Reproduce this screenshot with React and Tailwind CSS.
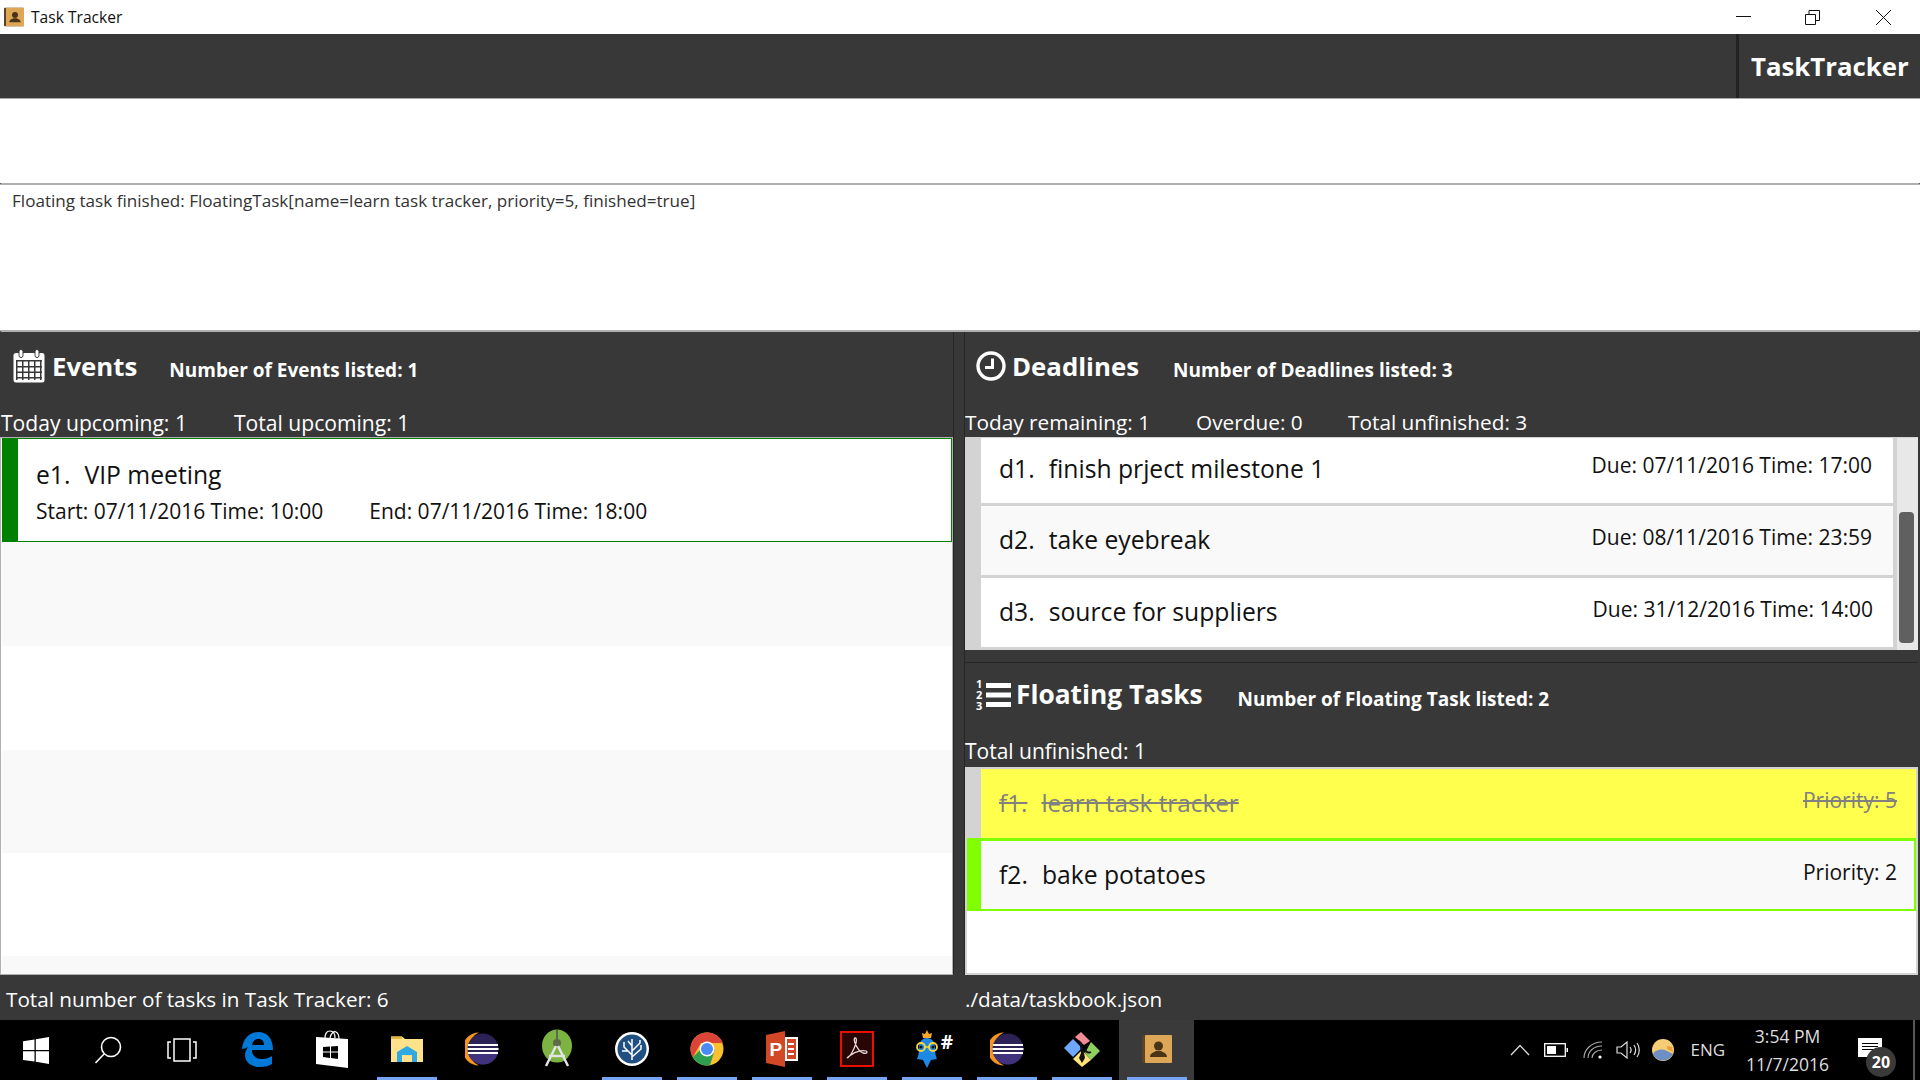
import React from 'react'

const font = { fontFamily: '"Open Sans", "Noto Sans", sans-serif' }

const Underline = ({ on }) => <div className={on ? 'h-[3px] w-[60px] bg-[#76a5f5]' : 'h-[3px] w-[60px]'} />

const TaskButton = ({ on, active, children }) => (
  <div className={`flex h-full w-[75px] flex-col items-center ${active ? 'bg-[#3a3a3a]' : ''}`}>
    <div className="flex flex-1 items-center justify-center">{children}</div>
    <Underline on={on} />
  </div>
)

const CalendarIcon = () => (
  <svg width="32" height="34" viewBox="0 0 32 34">
    <rect x="0.5" y="4" width="31" height="29.5" rx="2.5" fill="#fff" />
    <rect x="6" y="0.5" width="4" height="8" rx="2" fill="#fff" stroke="#383838" />
    <rect x="22" y="0.5" width="4" height="8" rx="2" fill="#fff" stroke="#383838" />
    <g fill="#383838">
      <rect x="3" y="11" width="26" height="1.5" />
      <rect x="3" y="17" width="26" height="1.5" />
      <rect x="3" y="22.5" width="26" height="1.5" />
      <rect x="3" y="28" width="26" height="1.5" />
      <rect x="3" y="11" width="1.5" height="20" />
      <rect x="9" y="11" width="1.5" height="20" />
      <rect x="15" y="11" width="1.5" height="20" />
      <rect x="21" y="11" width="1.5" height="20" />
      <rect x="27" y="11" width="1.5" height="20" />
    </g>
  </svg>
)

const ClockIcon = () => (
  <svg width="30" height="30" viewBox="0 0 30 30" fill="none" stroke="#fff">
    <circle cx="15" cy="15" r="13" strokeWidth="3.4" />
    <path d="M16.5 7.5V16.5H9" strokeWidth="3" />
  </svg>
)

// numbered list glyph: the digits are part of the icon
const ListIcon = () => (
  <svg width="35" height="34" viewBox="0 0 35 34" fill="#fff">
    <g fontSize="11" fontWeight="700" fontFamily="Open Sans">
      <text x="0" y="10">1</text>
      <text x="0" y="21">2</text>
      <text x="0" y="32">3</text>
    </g>
    <rect x="10" y="5" width="25" height="5" />
    <rect x="10" y="14.500" width="25" height="5" />
    <rect x="10" y="24" width="25" height="5" />
  </svg>
)

const EclipseIcon = () => (
  <svg width="34" height="34" viewBox="0 0 34 34">
    <path d="M14 0.5A16.5 16.5 0 0 0 14 33.5A18 18 0 0 1 14 0.5Z" fill="#f7941e" />
    <circle cx="18" cy="17" r="15.5" fill="#2c2255" />
    <path d="M3 21h30a15.5 15.5 0 0 1-30 0Z" fill="#473788" opacity="0.8" />
    <g fill="#fff">
      <rect x="3" y="12" width="30" height="2" />
      <rect x="2.5" y="16" width="31" height="2" />
      <rect x="3" y="20" width="30" height="2" />
    </g>
  </svg>
)

const AppIcon = ({ size = 30 }) => (
  <svg width={size} height={size} viewBox="0 0 30 30">
    <rect x="0" y="1" width="30" height="28" rx="1.5" fill="#5b4322" />
    <rect x="3" y="1" width="27" height="28" rx="1" fill="#dda757" />
    <circle cx="16.5" cy="12" r="4.5" fill="#4a3418" />
    <path d="M8 23c0-4 4-4.5 6-6h5c2 1.5 6 2 6 6Z" fill="#4a3418" />
  </svg>
)

const Taskbar = () => (
  <div className="flex h-[60px] shrink-0 items-center bg-black">
    <div className="flex h-full w-[72px] items-center justify-center">
      <svg width="26" height="27" viewBox="0 0 26 27" fill="#fff">
        <path d="M0 4.2 11.5 2.5V13H0ZM12.8 2.3 26 0V13H12.8ZM0 14.3H11.5V24.6L0 23ZM12.8 14.3H26V27L12.8 24.8Z" />
      </svg>
    </div>
    <div className="flex h-full w-[72px] items-center justify-center">
      <svg width="28" height="28" viewBox="0 0 28 28" fill="none" stroke="#fff" strokeWidth="1.6">
        <circle cx="17" cy="11" r="9.5" />
        <path d="M10 18 1.5 27" />
      </svg>
    </div>
    <div className="flex h-full w-[75px] items-center justify-center">
      <svg width="30" height="24" viewBox="0 0 30 24" fill="none" stroke="#fff" strokeWidth="1.5">
        <rect x="7" y="1" width="16" height="22" />
        <path d="M4 4H1V20H4M26 4H29V20H26" />
      </svg>
    </div>
    <TaskButton>
      <svg width="32" height="36" viewBox="0 0 32 36">
        <path
          d="M1 18C2 7 9 1 17 1c9 0 15 6 15 18H11c0 6 4 9 10 9 4 0 7-1 10-3v8c-3 2-7 3-12 3C10 36 4 31 4 24c0-3 1-5 3-8-2 1-4 2-6 2Zm10-4h12c0-4-2-6-6-6-3 0-5 2-6 6Z"
          fill="#0078d7"
        />
      </svg>
    </TaskButton>
    <TaskButton>
      <svg width="32" height="38" viewBox="0 0 32 38">
        <path d="M9 8C9 2 12 1 14 1s5 1 5 7M14 8c1-5 4-7 6-6s3 3 3 7" fill="none" stroke="#fff" strokeWidth="1.2" />
        <path d="M0 7 32 9V38L0 34Z" fill="#fff" />
        <path d="M7 17 14 16.500V21.500H7ZM15 16.500 22 16V21.500H15ZM7 22.500H14V28L7 27ZM15 22.500H22V29L15 28Z" fill="#000" />
      </svg>
    </TaskButton>
    <TaskButton on>
      <svg width="32" height="28" viewBox="0 0 32 28">
        <path d="M0 1.500H11L14 4H32V27H0Z" fill="#ffe28a" />
        <rect x="0" y="1.500" width="11" height="2.500" fill="#e6b740" />
        <path d="M6 17 16 11 26 17V27H21V20H11V27H6Z" fill="#2fa9e4" />
      </svg>
    </TaskButton>
    <TaskButton>
      <EclipseIcon />
    </TaskButton>
    <TaskButton>
      <svg width="32" height="40" viewBox="0 0 32 40">
        <ellipse cx="16" cy="17" rx="15" ry="16.500" fill="#7cb342" />
        <circle cx="16" cy="14" r="4" fill="#5d6b4a" />
        <path d="M15 1h2v10h-2Z" fill="#5d6b4a" />
        <path d="M15 17 5 37M17 17 27 37M8 27H24" stroke="#e3e3e3" strokeWidth="2.500" fill="none" />
      </svg>
    </TaskButton>
    <TaskButton on>
      <svg width="36" height="36" viewBox="0 0 36 36">
        <circle cx="18" cy="18" r="17" fill="#fff" />
        <circle cx="18" cy="18" r="14.500" fill="#205081" />
        <path d="M18 29V8M18 24 10 16V11M18 20 26 12V9M18 26 27 18V14M14 20 8 20M18 15 14 10" stroke="#fff" strokeWidth="1.500" fill="none" />
      </svg>
    </TaskButton>
    <TaskButton on>
      <svg width="34" height="34" viewBox="0 0 34 34">
        <circle cx="17" cy="17" r="16.500" fill="#fbc02d" />
        <path d="M17 .5A16.500 16.500 0 0 0 2.700 25.200L11 11H33A16.500 16.500 0 0 0 17 .5Z" fill="#db4437" />
        <path d="M2.700 25.200A16.500 16.500 0 0 0 20 33.200L25 17 11 17Z" fill="#2e9e4f" />
        <circle cx="17" cy="17" r="7.500" fill="#fff" />
        <circle cx="17" cy="17" r="6" fill="#4a8af4" />
      </svg>
    </TaskButton>
    <TaskButton on>
      <svg width="32" height="36" viewBox="0 0 32 36">
        <path d="M0 4 19 0V36L0 32Z" fill="#d24726" />
        <rect x="19" y="6" width="13" height="24" fill="#fff" />
        <rect x="21" y="8" width="9" height="20" fill="#d24726" />
        <path d="M22 12h6v2h-6ZM22 17h6v2h-6ZM22 22h6v2h-6Z" fill="#fff" />
        <text x="3.500" y="25" fontSize="19" fontWeight="700" fill="#fff" fontFamily="Liberation Sans">P</text>
      </svg>
    </TaskButton>
    <TaskButton on>
      <svg width="34" height="36" viewBox="0 0 34 36">
        <rect x="1" y="1" width="32" height="34" fill="#2a0505" stroke="#eb0f00" strokeWidth="2" />
        <path d="M7 27c3-1 7-8 9-15 1-4 0-5-1-5s-1 2 0 5c2 5 5 9 8 10 4 1 5-1 3-2-3-1-10 0-15 4-2 1-4 3-4 3Z" fill="none" stroke="#e8d9d9" strokeWidth="1.300" />
      </svg>
    </TaskButton>
    <TaskButton on>
      <div className="flex items-start">
        <svg width="34" height="38" viewBox="0 0 34 38">
          <path d="M17 0l2 4 3-1-1 5H13l-1-5 3 1Z" fill="#f9a825" />
          <path d="M17 8c6 0 8 5 8 11 0 6 2 10 2 10l-6 1-4 8-4-8-6-1s2-4 2-10c0-6 2-11 8-11Z" fill="#1e88e5" />
          <circle cx="11" cy="17" r="4" fill="none" stroke="#fdd835" strokeWidth="1.800" />
          <circle cx="23" cy="17" r="4" fill="none" stroke="#fdd835" strokeWidth="1.800" />
          <path d="M15 17h4" stroke="#fdd835" strokeWidth="1.500" />
          <circle cx="11" cy="17" r="1.500" fill="#111" />
          <circle cx="23" cy="17" r="1.500" fill="#111" />
        </svg>
        <span className="-ml-[3px] text-[19px] leading-[24px] font-bold text-white">#</span>
      </div>
    </TaskButton>
    <TaskButton on>
      <EclipseIcon />
    </TaskButton>
    <TaskButton on>
      <svg width="36" height="36" viewBox="0 0 36 36">
        <path d="M17 1 26 10 20 14 11 6Z" fill="#f28b94" />
        <path d="M27 11 36 20 27 29 21 22Z" fill="#8fd05f" />
        <path d="M9 8 18 17 9 26 0 17Z" fill="#6ea8fe" />
        <path d="M18 19 27 29 18 36 9 28Z" fill="#ffe27a" />
        <path d="M15 9 18 12 20 22 21 27 18 32 15 27 17 22Z" fill="#111" />
        <path d="M21 18a4 4 0 0 0 6 3" stroke="#111" strokeWidth="2" fill="none" />
      </svg>
    </TaskButton>
    <TaskButton on active>
      <AppIcon />
    </TaskButton>

    <div className="ml-auto flex h-full items-center">
      <svg width="20" height="12" viewBox="0 0 20 12" fill="none" stroke="#ddd" strokeWidth="1.300" className="mr-[14px]">
        <path d="M1 11 10 1.500 19 11" />
      </svg>
      <svg width="24" height="14" viewBox="0 0 24 14" className="mr-[15px]">
        <rect x="0.700" y="0.700" width="20.600" height="12.600" fill="none" stroke="#fff" strokeWidth="1.300" />
        <rect x="3" y="3" width="9" height="8" fill="#fff" />
        <rect x="22.500" y="5" width="1.500" height="4" fill="#fff" />
      </svg>
      <svg width="20" height="18" viewBox="0 0 20 18" fill="none" stroke="#aaa" strokeWidth="1.100" className="mr-[13px]">
        <path d="M1 17C1 9 8 1 19 1M5 17C5 11 10 5 19 5M9 17C9 13 13 9 19 9" />
        <circle cx="17" cy="16" r="1.600" fill="#fff" stroke="none" />
      </svg>
      <svg width="24" height="18" viewBox="0 0 24 18" fill="none" stroke="#ddd" strokeWidth="1.200" className="mr-[12px]">
        <path d="M1 6H5L11 1V17L5 12H1Z" />
        <path d="M14 6C15.500 8 15.500 10 14 12M18 4C20 7 20 11 18 14M21 2C24 6 24 12 21 16" />
      </svg>
      <svg width="22" height="22" viewBox="0 0 22 22" className="mr-[17px]">
        <circle cx="11" cy="11" r="11" fill="#f4cd76" />
        <path d="M1 15C4 10 10 10 13 11L21 15A11 11 0 0 1 1 15Z" fill="#6d8fc4" />
        <path d="M15 7 20 8 21 13 15 10Z" fill="#eba03a" />
      </svg>
      <span className="mr-[21px] text-[17px] text-[#ddd]">ENG</span>
      <div className="mr-[29px] flex flex-col items-center text-[17.5px] leading-[28px] text-[#ddd]">
        <span>3:54 PM</span>
        <span>11/7/2016</span>
      </div>
      <div className="relative mt-[18px] mr-[31px] h-[19px] w-[24px] self-start bg-white">
        <div className="mx-auto mt-[5px] h-[1px] w-[16px] bg-black" />
        <div className="mx-auto mt-[2px] h-[1px] w-[16px] bg-black" />
        <div className="mx-auto mt-[2px] h-[1px] w-[16px] bg-black" />
        <div className="absolute top-[9px] left-[8px] flex h-[30px] w-[30px] items-center justify-center rounded-full bg-[#3a3a3a] text-[16px] font-bold text-white">
          20
        </div>
      </div>
      <div className="h-full w-[2px] bg-[#555]" />
      <div className="w-[5px]" />
    </div>
  </div>
)

const DeadlineRow = ({ id, name, due, shade, height, titleTop, dueTop, dueRight }) => (
  <div className={`flex w-full bg-[#d3d3d3] ${height}`}>
    <div className="w-[16px] shrink-0" />
    <div className={`mb-[3px] flex flex-1 items-start justify-between pl-[18px] ${dueRight} ${shade ? 'bg-[#f9f9f9]' : 'bg-white'}`}>
      <span className={`${titleTop} text-[24.7px] leading-[34px] text-[#111]`}>
        {id}
        <span className="ml-[14px]">{name}</span>
      </span>
      <span className={`${dueTop} text-[21px] leading-[32px] text-[#111]`}>{due}</span>
    </div>
  </div>
)

export default function App() {
  return (
    <div className="flex h-[1080px] w-[1920px] flex-col overflow-hidden bg-[#383838]" style={font}>
      {/* title bar */}
      <div className="flex h-[34px] shrink-0 items-center bg-white">
        <div className="ml-[4px] flex">
          <AppIcon size={20} />
        </div>
        <span className="ml-[7px] pt-[2px] text-[15.6px] text-[#111]">Task Tracker</span>
        <div className="ml-auto flex items-center">
          <svg width="15" height="2" className="mr-[54px]">
            <rect width="15" height="1" y="0" fill="#111" />
          </svg>
          <svg width="15" height="15" viewBox="0 0 15 15" fill="none" stroke="#111" className="mr-[56px]">
            <path d="M0.500 4.500H10.500V14.500H0.500ZM4 4.500V.5H14.500V10.500H10.500" />
          </svg>
          <svg width="15" height="15" viewBox="0 0 15 15" fill="none" stroke="#111" className="mr-[29px]">
            <path d="M0 0 15 15M15 0 0 15" />
          </svg>
        </div>
      </div>

      {/* header */}
      <div className="flex h-[65px] shrink-0 justify-end border-b border-[#aaa] bg-[#383838]">
        <div className="flex w-[184px] items-center border-l-[3px] border-[#222] pl-[12px]">
          <span className="text-[25.8px] font-bold text-white">TaskTracker</span>
        </div>
      </div>

      {/* command box */}
      <div className="h-[84px] shrink-0 bg-white" />

      {/* result box */}
      <div className="h-[149px] shrink-0 rounded-[2px] border-y-2 border-[#b0b0b0] bg-white pt-[4px] pl-[12px]">
        <span className="text-[17.1px] leading-[24px] text-[#333]">
          Floating task finished: FloatingTask[name=learn task tracker, priority=5, finished=true]
        </span>
      </div>

      <div className="flex min-h-0 flex-1">
        {/* events */}
        <div className="flex w-[953px] shrink-0 flex-col">
          <div className="flex h-[64px] items-center pt-[4px] pl-[13px]">
            <CalendarIcon />
            <span className="ml-[7px] text-[25.8px] font-bold text-white">Events</span>
            <span className="mt-[8px] ml-[32px] text-[19px] font-bold text-white">Number of Events listed: 1</span>
          </div>
          <div className="flex h-[41px] items-end pl-[1px] text-[21.1px] leading-[29px] text-white">
            <span className="w-[233px]">Today upcoming: 1</span>
            <span>Total upcoming: 1</span>
          </div>
          <div className="flex h-[538px] flex-col overflow-hidden border border-[#b0b0b0] bg-white pl-[1px]">
            <div className="flex h-[104px] shrink-0 border border-[#008000] bg-white">
              <div className="w-[15px] shrink-0 bg-[#008000]" />
              <div className="pt-[17px] pl-[18px]">
                <div className="text-[24.7px] leading-[38px] text-[#111]">
                  e1.<span className="ml-[14px]">VIP meeting</span>
                </div>
                <div className="mt-[1px] text-[21px] leading-[32px] text-[#111]">
                  Start: 07/11/2016 Time: 10:00<span className="ml-[46px]">End: 07/11/2016 Time: 18:00</span>
                </div>
              </div>
            </div>
            <div className="h-[104px] shrink-0 bg-[#f9f9f9]" />
            <div className="h-[104px] shrink-0 bg-white" />
            <div className="h-[103px] shrink-0 bg-[#f9f9f9]" />
            <div className="h-[103px] shrink-0 bg-white" />
            <div className="h-[18px] shrink-0 bg-[#f9f9f9]" />
          </div>
        </div>

        {/* divider */}
        <div className="w-[12px] shrink-0 border-x border-[#262626]" />

        {/* deadlines + floating */}
        <div className="flex w-[953px] shrink-0 flex-col">
          <div className="flex h-[64px] items-center pt-[4px] pl-[11px]">
            <ClockIcon />
            <span className="ml-[6px] text-[25.8px] font-bold text-white">Deadlines</span>
            <span className="mt-[8px] ml-[34px] text-[19px] font-bold text-white">Number of Deadlines listed: 3</span>
          </div>
          <div className="flex h-[41px] items-end text-[20.8px] leading-[29px] text-white">
            <span className="w-[231px]">Today remaining: 1</span>
            <span className="w-[152px]">Overdue: 0</span>
            <span>Total unfinished: 3</span>
          </div>
          <div className="flex h-[213px] shrink-0 border-t border-[#d3d3d3] bg-[#d3d3d3]">
            <div className="w-[928px] shrink-0">
              <DeadlineRow
                id="d1."
                name="finish prject milestone 1"
                due="Due: 07/11/2016 Time: 17:00"
                height="h-[68px]"
                titleTop="mt-[14px]"
                dueTop="mt-[11px]"
                dueRight="pr-[21px]"
              />
              <DeadlineRow
                id="d2."
                name="take eyebreak"
                due="Due: 08/11/2016 Time: 23:59"
                shade
                height="h-[72px]"
                titleTop="mt-[17px]"
                dueTop="mt-[15px]"
                dueRight="pr-[21px]"
              />
              <DeadlineRow
                id="d3."
                name="source for suppliers"
                due="Due: 31/12/2016 Time: 14:00"
                height="h-[72px]"
                titleTop="mt-[17px]"
                dueTop="mt-[15px]"
                dueRight="pr-[20px]"
              />
            </div>
            <div className="flex flex-1 flex-col border-l-4 border-[#d3d3d3] bg-[#e8e8e8] pl-[2px]">
              <div className="mt-[74px] h-[131px] w-[15px] rounded-[4px] bg-[#606060]" />
            </div>
          </div>
          <div className="mt-[12px] h-[1px] shrink-0 bg-[#262626]" />

          <div className="flex h-[64px] shrink-0 items-center pl-[11px]">
            <ListIcon />
            <span className="ml-[5px] text-[26.3px] font-bold text-white">Floating Tasks</span>
            <span className="mt-[8px] ml-[35px] text-[19px] font-bold text-white">Number of Floating Task listed: 2</span>
          </div>
          <div className="flex h-[40px] shrink-0 items-end text-[21px] leading-[32px] text-white">Total unfinished: 1</div>
          <div className="flex h-[208px] shrink-0 flex-col border-2 border-[#d3d3d3] bg-white">
            <div className="flex h-[69px] shrink-0 bg-[#d3d3d3]">
              <div className="w-[14px] shrink-0" />
              <div className="flex flex-1 items-center justify-between bg-[#ffff4d] pr-[19px] pl-[18px] text-[#808080] line-through">
                <span className="text-[24.3px]">
                  f1.<span className="ml-[14px]">learn task tracker</span>
                </span>
                <span className="-mt-[6px] text-[21px]">Priority: 5</span>
              </div>
            </div>
            <div className="flex h-[73px] shrink-0 border-x-[2px] border-t-[3px] border-b-[2px] border-[#7fff00] bg-[#f9f9f9]">
              <div className="w-[12px] shrink-0 bg-[#7fff00]" />
              <div className="flex flex-1 items-center justify-between pr-[17px] pl-[18px] text-[#111]">
                <span className="text-[24.7px]">
                  f2.<span className="ml-[14px]">bake potatoes</span>
                </span>
                <span className="-mt-[5px] text-[21px]">Priority: 2</span>
              </div>
            </div>
          </div>
        </div>
      </div>

      {/* status bar */}
      <div className="flex h-[45px] shrink-0 items-center pt-[4px] text-[20.7px] text-white">
        <span className="w-[965px] pl-[6px]">Total number of tasks in Task Tracker: 6</span>
        <span>./data/taskbook.json</span>
      </div>

      <Taskbar />
    </div>
  )
}
